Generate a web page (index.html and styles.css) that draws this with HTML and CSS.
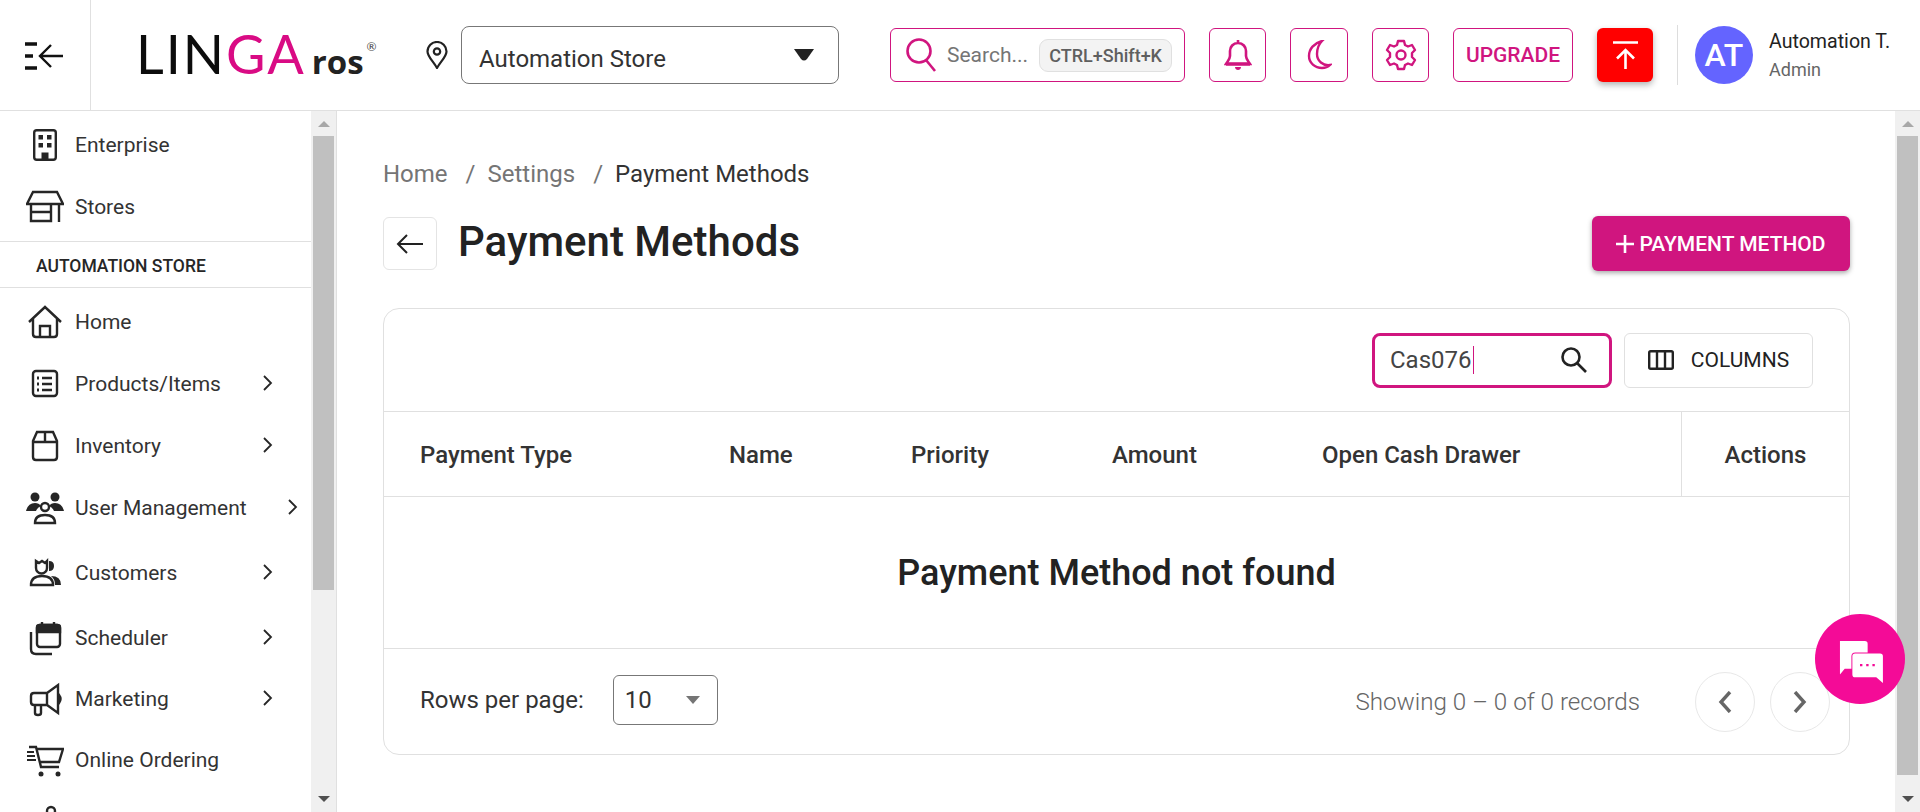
FILE: index.html
```html
<!DOCTYPE html>
<html>

<head>
    <title>Payment Methods</title>
    <link rel="stylesheet" href="styles.css">
</head>

<body>
    <header class="topbar">
        <div class="toggle-cell">
            <svg width="38" height="30" viewBox="0 0 38 30" fill="none" stroke="#111" stroke-width="2.4">
                <path d="M0 3h12M0 15h8M0 27h12" stroke-width="3.4" />
                <path d="M38 15H15M26 4 15 15l11 11" />
            </svg>
        </div>
        <div class="logo"><span class="logo-dark">LIN</span><span class="logo-pink">GA</span><span class="logo-ros">ros</span><span class="logo-reg">®</span></div>
        <svg class="pin" width="22" height="28" viewBox="0 0 22 28" fill="none" stroke="#222" stroke-width="2.2">
            <path d="M11 27C7 20 1.500 15.500 1.500 10.500a9.500 9.500 0 0 1 19 0C20.500 15.500 15 20 11 27z" />
            <circle cx="11" cy="10.500" r="3.200" />
        </svg>
        <div class="store-select">
            <span class="store-name">Automation Store</span>
            <svg width="20" height="12" viewBox="0 0 20 12"><path d="M0 0h20l-7 10q-3 3-6 0z" fill="#222" /></svg>
        </div>
        <div class="global-search">
            <svg width="34" height="34" viewBox="0 0 34 34" fill="none" stroke="#d0157f" stroke-width="2.600">
                <circle cx="14" cy="13" r="11.500" />
                <path d="M21 22l9 11" />
            </svg>
            <span class="search-hint">Search...</span>
            <span class="shortcut">CTRL+Shift+K</span>
        </div>
        <button class="icon-btn">
            <svg width="28" height="32" viewBox="0 0 28 32" fill="none" stroke="#d0157f" stroke-width="2.600">
                <path d="M14 1v3M14 4c-5 0-8 4-8 8v5c0 3-2 5-4 8h24c-2-3-4-5-4-8v-5c0-4-3-8-8-8z" />
                <path d="M2 25h24" stroke-width="3.400" />
                <path d="M11 28c0 4 6 4 6 0z" fill="#d0157f" stroke="none" />
            </svg>
        </button>
        <button class="icon-btn wide">
            <svg width="26" height="30" viewBox="0 0 26 30" fill="none" stroke="#d0157f" stroke-width="2.400">
                <path d="M16 1C8 3 3 9 3 16c0 7 6 12 13 12 3 0 6-1 8-3-7 1-13-4-13-11 0-5 2-10 5-13z" />
            </svg>
        </button>
        <button class="icon-btn">
            <svg width="32" height="32" viewBox="0 0 32 32" fill="none" stroke="#d0157f" stroke-width="2.400">
                <path d="M13 2h6l1 4 3 1.500 4-1.500 3 5-3 3v4l3 3-3 5-4-1.500-3 1.500-1 4h-6l-1-4-3-1.500L5 26l-3-5 3-3v-4l-3-3 3-5 4 1.500L12 6z" stroke-linejoin="round" />
                <circle cx="16" cy="16" r="4.500" />
            </svg>
        </button>
        <button class="upgrade-btn">UPGRADE</button>
        <button class="red-btn">
            <svg width="25" height="28" viewBox="0 0 25 28" fill="none" stroke="#fff" stroke-width="2.600">
                <path d="M0 1.500h25M12.500 28V9M4 17.500 12.500 9 21 17.500" />
            </svg>
        </button>
        <div class="user-divider"></div>
        <div class="avatar">AT</div>
        <div class="user-info">
            <div class="user-name">Automation T.</div>
            <div class="user-role">Admin</div>
        </div>
    </header>

    <div class="shell">
        <aside class="sidebar">
            <nav class="side-nav">
                <div class="nav-group first">
                    <div class="nav-row">
                        <svg class="nav-icon" viewBox="0 0 38 38" fill="none" stroke="#262626" stroke-width="2.400">
                            <rect x="8.200" y="4.200" width="21.600" height="29.600" rx="2.500" />
                            <path d="M12.500 9h4.500v4.500h-4.500zM21 9h4.500v4.500H21zM12.500 17h4.500v4.500h-4.500zM21 17h4.500v4.500H21zM15.500 33v-6.500h7V33z" fill="#262626" stroke="none" />
                        </svg>
                        <span>Enterprise</span>
                    </div>
                    <div class="nav-row">
                        <svg class="nav-icon" viewBox="0 0 38 38" fill="none" stroke="#262626" stroke-width="2.400">
                            <path d="M7 4h24l6 12H1zM5 16v17h20V16M5 24h20M33 16v18" />
                        </svg>
                        <span>Stores</span>
                    </div>
                </div>
                <div class="nav-section">AUTOMATION STORE</div>
                <div class="nav-group second">
                    <div class="nav-row">
                        <svg class="nav-icon" viewBox="0 0 38 38" fill="none" stroke="#262626" stroke-width="2.400">
                            <path d="M3 19 19 4l16 15M7 16v15q0 3 3 3h18q3 0 3-3V16M14 34V23h10v11" />
                        </svg>
                        <span>Home</span>
                    </div>
                    <div class="nav-row">
                        <svg class="nav-icon" viewBox="0 0 38 38" fill="none" stroke="#262626" stroke-width="2.400">
                            <rect x="7" y="6" width="24" height="25" rx="3" />
                            <path d="M16 13h10M16 19h10M16 25h10" />
                            <path d="M11 13h2M11 19h2M11 25h2" stroke-width="3" />
                        </svg>
                        <span class="nav-label">Products/Items</span>
                        <svg class="chev" width="10" height="16" viewBox="0 0 10 16" fill="none" stroke="#262626" stroke-width="1.800"><path d="M1 1l7 7-7 7" /></svg>
                    </div>
                    <div class="nav-row">
                        <svg class="nav-icon" viewBox="0 0 38 38" fill="none" stroke="#262626" stroke-width="2.400">
                            <path d="M7 14l4-9h16l4 9v16q0 3-3 3H10q-3 0-3-3zM7 15h24M19 5v10" />
                        </svg>
                        <span class="nav-label">Inventory</span>
                        <svg class="chev" width="10" height="16" viewBox="0 0 10 16" fill="none" stroke="#262626" stroke-width="1.800"><path d="M1 1l7 7-7 7" /></svg>
                    </div>
                    <div class="nav-row">
                        <svg class="nav-icon" viewBox="0 0 38 38" fill="none" stroke="#262626" stroke-width="2.400">
                            <circle cx="9" cy="8" r="4.500" fill="#262626" stroke="none" />
                            <circle cx="29" cy="8" r="4.500" fill="#262626" stroke="none" />
                            <path d="M0 22q2-8 9-8 4 0 6 3-4 2-5 5zM38 22q-2-8-9-8-4 0-6 3 4 2 5 5z" fill="#262626" stroke="none" />
                            <circle cx="19" cy="18" r="4" />
                            <path d="M9 34q0-8 10-8t10 8z" />
                        </svg>
                        <span class="nav-label">User Management</span>
                        <svg class="chev" width="10" height="16" viewBox="0 0 10 16" fill="none" stroke="#262626" stroke-width="1.800"><path d="M1 1l7 7-7 7" /></svg>
                    </div>
                    <div class="nav-row tall">
                        <svg class="nav-icon" viewBox="0 0 38 38" fill="none" stroke="#262626" stroke-width="2.400">
                            <path d="M10 7l3 2 3-2 3 2 2-2v7a5.500 5.500 0 0 1-11 0z" />
                            <path d="M23 7q5 0 5 5t-5 5z" fill="#262626" stroke="none" />
                            <path d="M5 31q0-9 11-9t11 9z" />
                            <path d="M25 22q10 0 10 9h-6q0-6-4-9z" fill="#262626" stroke="none" />
                        </svg>
                        <span class="nav-label">Customers</span>
                        <svg class="chev" width="10" height="16" viewBox="0 0 10 16" fill="none" stroke="#262626" stroke-width="1.800"><path d="M1 1l7 7-7 7" /></svg>
                    </div>
                    <div class="nav-row">
                        <svg class="nav-icon" viewBox="0 0 38 38" fill="none" stroke="#262626" stroke-width="2.400">
                            <rect x="11" y="6" width="23" height="22" rx="3" />
                            <path d="M11 8q0-2 3-2h17q3 0 3 2v5H11zM16 3v4M28 3v4" fill="#262626" />
                            <path d="M5 13v17q0 5 5 5h16" />
                        </svg>
                        <span class="nav-label">Scheduler</span>
                        <svg class="chev" width="10" height="16" viewBox="0 0 10 16" fill="none" stroke="#262626" stroke-width="1.800"><path d="M1 1l7 7-7 7" /></svg>
                    </div>
                    <div class="nav-row short">
                        <svg class="nav-icon" viewBox="0 0 38 38" fill="none" stroke="#262626" stroke-width="2.400">
                            <path d="M32 5v28L21 25H8q-3 0-3-3v-6q0-3 3-3h13zM21 13v12M9 25v8q0 2 3 2t3-2v-8" />
                            <path d="M33 15q3 4 0 8z" fill="#262626" />
                        </svg>
                        <span class="nav-label">Marketing</span>
                        <svg class="chev" width="10" height="16" viewBox="0 0 10 16" fill="none" stroke="#262626" stroke-width="1.800"><path d="M1 1l7 7-7 7" /></svg>
                    </div>
                    <div class="nav-row">
                        <svg class="nav-icon" viewBox="0 0 38 38" fill="none" stroke="#262626" stroke-width="2.400">
                            <path d="M3 6h7l5 20h18M11 8h26l-4 13H14" />
                            <path d="M1 11h7M1 15h8M1 19h9" stroke-width="2" />
                            <circle cx="15" cy="33" r="2.500" fill="#262626" stroke="none" />
                            <circle cx="32" cy="33" r="2.500" fill="#262626" stroke="none" />
                        </svg>
                        <span>Online Ordering</span>
                    </div>
                    <div class="nav-row">
                        <svg class="nav-icon" viewBox="0 0 38 38" fill="none" stroke="#262626" stroke-width="2.400">
                            <circle cx="25" cy="8" r="4" />
                            <path d="M22 12 8 30" />
                        </svg>
                    </div>
                </div>
            </nav>
            <div class="scroll-track">
                <span class="arrow-up"></span>
                <div class="scroll-thumb side-thumb"></div>
                <span class="arrow-down"></span>
            </div>
        </aside>

        <main class="content">
            <div class="breadcrumb">
                <span class="crumb">Home</span>
                <span class="crumb-sep">/</span>
                <span class="crumb">Settings</span>
                <span class="crumb-sep">/</span>
                <span class="crumb-current">Payment Methods</span>
            </div>
            <div class="title-row">
                <button class="back-btn">
                    <svg width="28" height="20" viewBox="0 0 28 20" fill="none" stroke="#222" stroke-width="2">
                        <path d="M27 10H2M11 1 2 10l9 9" />
                    </svg>
                </button>
                <h1 class="page-title">Payment Methods</h1>
                <button class="add-btn">
                    <svg width="18" height="18" viewBox="0 0 18 18" fill="none" stroke="#fff" stroke-width="2.600"><path d="M9 0v18M0 9h18" /></svg>
                    PAYMENT METHOD
                </button>
            </div>

            <section class="card">
                <div class="card-toolbar">
                    <div class="table-search">
                        <span class="table-search-text">Cas076</span><span class="caret"></span>
                        <svg width="28" height="28" viewBox="0 0 28 28" fill="none" stroke="#222" stroke-width="2.600">
                            <circle cx="11" cy="11" r="8.500" />
                            <path d="M17 17l9 9" />
                        </svg>
                    </div>
                    <button class="columns-btn">
                        <svg width="26" height="20" viewBox="0 0 26 20" fill="none" stroke="#222" stroke-width="2.400">
                            <rect x="1.200" y="1.200" width="23.600" height="17.600" rx="1.500" />
                            <path d="M9 1v18M17 1v18" />
                        </svg>
                        COLUMNS
                    </button>
                </div>
                <table class="pay-table">
                    <colgroup>
                        <col class="col-type">
                        <col class="col-name">
                        <col class="col-priority">
                        <col class="col-amount">
                        <col class="col-drawer">
                        <col class="col-actions">
                    </colgroup>
                    <thead>
                        <tr>
                            <th>Payment Type</th>
                            <th>Name</th>
                            <th>Priority</th>
                            <th>Amount</th>
                            <th>Open Cash Drawer</th>
                            <th class="actions-head">Actions</th>
                        </tr>
                    </thead>
                    <tbody>
                        <tr>
                            <td colspan="6" class="empty-cell">Payment Method not found</td>
                        </tr>
                    </tbody>
                </table>
                <div class="card-footer">
                    <span class="rows-label">Rows per page:</span>
                    <div class="rows-select">
                        <span>10</span>
                        <svg width="14" height="8" viewBox="0 0 14 8"><path d="M0 0h14L7 8z" fill="#757575" /></svg>
                    </div>
                    <span class="records">Showing 0 – 0 of 0 records</span>
                    <button class="page-btn">
                        <svg width="14" height="22" viewBox="0 0 14 22" fill="none" stroke="#666" stroke-width="3.400"><path d="M12 1 3 11l9 10" /></svg>
                    </button>
                    <button class="page-btn">
                        <svg width="14" height="22" viewBox="0 0 14 22" fill="none" stroke="#666" stroke-width="3.400"><path d="M2 1l9 10-9 10" /></svg>
                    </button>
                </div>
            </section>
        </main>

        <div class="scroll-track">
            <span class="arrow-up"></span>
            <div class="scroll-thumb"></div>
            <span class="arrow-down"></span>
        </div>
    </div>

    <div class="chat-bubble">
        <svg width="48" height="42" viewBox="0 0 48 44">
            <path d="M3 0h26q3 0 3 3v9H19q-4 0-4 4v13H8l-5 6V3q0-3 0-3z" fill="#fff" />
            <path d="M19 13h26q3 0 3 3v28l-7-6H19q-3 0-3-3V16q0-3 3-3z" fill="#fff" />
            <path d="M24 24h2.500v2.500H24zM30.500 24H33v2.500h-2.500zM37 24h2.500v2.500H37z" fill="#f40b97" />
        </svg>
    </div>
</body>

</html>
```
FILE: styles.css
```css
* {
    box-sizing: border-box;
}

html,
body {
    margin: 0;
    height: 812px;
    overflow: hidden;
}

body {
    font-family: Roboto, sans-serif;
    color: #262626;
    background-color: #fff;
}

button {
    font-family: Roboto, sans-serif;
    background-color: #fff;
    padding: 0;
    cursor: pointer;
}

/* top bar */
.topbar {
    height: 111px;
    display: flex;
    align-items: center;
    border-bottom: 1px solid #e0e0e0;
}

.toggle-cell {
    width: 91px;
    height: 110px;
    display: flex;
    align-items: center;
    padding: 2px 0 0 25px;
    border-right: 1px solid #e0e0e0;
}

.logo {
    width: 290px;
    margin-left: 45px;
    display: flex;
    align-items: baseline;
    font-family: Lato, sans-serif;
    font-size: 54px;
    letter-spacing: 2px;
    line-height: 1;
    position: relative;
    top: -1px;
}

.logo-dark {
    color: #0c0c0c;
}

.logo-pink {
    color: #d90b84;
}

.logo-ros {
    font-family: "Open Sans", sans-serif;
    font-weight: 700;
    font-size: 33px;
    letter-spacing: 0;
    color: #222;
    margin-left: 6px;
}

.logo-reg {
    font-size: 12px;
    letter-spacing: 0;
    color: #444;
    align-self: flex-start;
    margin: 14px 0 0 3px;
}

.store-select {
    width: 378px;
    height: 58px;
    margin-left: 13px;
    padding: 0 24px 0 17px;
    display: flex;
    align-items: center;
    justify-content: space-between;
    border: 1px solid #777;
    border-radius: 8px;
    font-size: 24px;
    color: #333;
}

.store-name {
    padding-top: 7px;
}

.global-search {
    width: 295px;
    height: 54px;
    margin-left: 51px;
    padding: 0 12px 0 14px;
    display: flex;
    align-items: center;
    border: 1px solid #d0157f;
    border-radius: 6px;
}

.search-hint {
    margin-left: 8px;
    font-size: 21px;
    color: #757575;
}

.shortcut {
    margin-left: auto;
    height: 33px;
    padding: 0 9px;
    display: flex;
    align-items: center;
    font-size: 18px;
    font-weight: 500;
    color: #5f5f5f;
    background-color: #f3f3f3;
    border: 1px solid #e0e0e0;
    border-radius: 9px;
}

.icon-btn {
    width: 57px;
    height: 54px;
    margin-left: 24px;
    display: flex;
    align-items: center;
    justify-content: center;
    border: 1px solid #d0157f;
    border-radius: 6px;
}

.icon-btn.wide {
    width: 58px;
}

.upgrade-btn {
    width: 120px;
    height: 54px;
    margin-left: 24px;
    font-size: 21px;
    font-weight: 500;
    color: #d0157f;
    border: 1px solid #d0157f;
    border-radius: 6px;
}

.red-btn {
    width: 56px;
    height: 54px;
    margin-left: 24px;
    display: flex;
    align-items: center;
    justify-content: center;
    background-color: #f00;
    border: none;
    border-radius: 6px;
    box-shadow: 0 3px 6px rgba(0, 0, 0, 0.3);
}

.user-divider {
    width: 1px;
    height: 60px;
    margin-left: 24px;
    background-color: #ddd;
}

.avatar {
    width: 58px;
    height: 58px;
    margin-left: 17px;
    display: flex;
    align-items: center;
    justify-content: center;
    border-radius: 50%;
    background-color: #6464ff;
    color: #fff;
    font-size: 32px;
    font-weight: 500;
}

.user-info {
    margin-left: 16px;
}

.user-name {
    font-size: 19.600px;
    color: #222;
    margin-bottom: 6px;
}

.user-role {
    font-size: 18px;
    color: #666;
}

/* layout below bar */
.shell {
    height: 701px;
    display: flex;
}

.sidebar {
    width: 337px;
    flex-shrink: 0;
    display: flex;
    border-right: 1px solid #e0e0e0;
}

.side-nav {
    width: 311px;
    overflow: hidden;
}

.nav-group.first {
    padding-top: 3px;
    padding-bottom: 3px;
    border-bottom: 1px solid #e0e0e0;
}

.nav-group.second {
    padding-top: 3px;
}

.nav-row {
    height: 62px;
    padding-left: 26px;
    display: flex;
    align-items: center;
    font-size: 21px;
    color: #333;
}

.nav-row.tall {
    height: 68px;
}

.nav-row.short {
    height: 60px;
}

.nav-icon {
    width: 38px;
    height: 38px;
    margin-right: 11px;
    flex-shrink: 0;
}

.nav-label {
    min-width: 147px;
}

.chev {
    margin-left: 41px;
    margin-top: -3px;
}

.nav-section {
    height: 46px;
    padding: 2px 0 0 36px;
    display: flex;
    align-items: center;
    font-size: 17.500px;
    font-weight: 500;
    border-bottom: 1px solid #e0e0e0;
}

.scroll-track {
    width: 25px;
    flex-shrink: 0;
    display: flex;
    flex-direction: column;
    align-items: center;
    background-color: #f0f0f0;
    position: relative;
}

.scroll-thumb {
    width: 21px;
    height: 639px;
    margin-top: 25px;
    background-color: #c0c0c0;
}

.side-thumb {
    height: 454px;
}

.arrow-up,
.arrow-down {
    position: absolute;
    width: 0;
    height: 0;
    border-left: 6px solid transparent;
    border-right: 6px solid transparent;
}

.arrow-up {
    top: 10px;
    border-bottom: 6px solid #a8a8a8;
}

.arrow-down {
    bottom: 10px;
    border-top: 6px solid #505050;
}

/* main content */
.content {
    flex: 1;
    min-width: 0;
    padding: 48px 45px 0 46px;
    overflow: hidden;
}

.breadcrumb {
    height: 30px;
    display: flex;
    align-items: center;
    font-size: 24px;
}

.crumb {
    color: #757575;
}

.crumb-sep {
    color: #757575;
    margin: 0 12px 0 18px;
}

.crumb-current {
    color: #333;
}

.title-row {
    margin-top: 27px;
    display: flex;
    align-items: center;
}

.back-btn {
    width: 54px;
    height: 53px;
    display: flex;
    align-items: center;
    justify-content: center;
    border: 1px solid #e4e4e4;
    border-radius: 6px;
}

.page-title {
    margin: -5px 0 0 21px;
    font-size: 42px;
    font-weight: 500;
    color: #222;
}

.add-btn {
    width: 258px;
    height: 55px;
    margin-left: auto;
    display: flex;
    align-items: center;
    justify-content: center;
    gap: 5px;
    font-size: 21px;
    font-weight: 500;
    color: #fff;
    background-color: #d0157f;
    border: none;
    border-radius: 6px;
    box-shadow: 0 2px 5px rgba(0, 0, 0, 0.35);
}

.card {
    height: 447px;
    margin-top: 37px;
    border: 1px solid #e0e0e0;
    border-radius: 16px;
}

.card-toolbar {
    height: 103px;
    padding: 0 36px 0 0;
    display: flex;
    align-items: center;
    justify-content: flex-end;
    gap: 12px;
    border-bottom: 1px solid #e0e0e0;
}

.table-search {
    width: 240px;
    height: 55px;
    padding: 0 21px 0 15px;
    display: flex;
    align-items: center;
    border: 3px solid #d0157f;
    border-radius: 8px;
    font-size: 24px;
    color: #444;
}

.caret {
    width: 1px;
    height: 28px;
    margin-left: 1px;
    background-color: #d0157f;
}

.table-search svg {
    margin-left: auto;
}

.columns-btn {
    width: 189px;
    height: 55px;
    display: flex;
    align-items: center;
    justify-content: center;
    gap: 17px;
    font-size: 21px;
    color: #222;
    border: 1px solid #e0e0e0;
    border-radius: 6px;
}

.pay-table {
    width: 100%;
    border-collapse: collapse;
    table-layout: fixed;
}

.col-type {
    width: 309px;
}

.col-name {
    width: 182px;
}

.col-priority {
    width: 201px;
}

.col-amount {
    width: 210px;
}

.col-drawer {
    width: 395px;
}

.pay-table th {
    height: 84px;
    padding: 2px 0 0 36px;
    text-align: left;
    font-size: 24px;
    font-weight: 500;
    color: #333;
    border-bottom: 1px solid #e0e0e0;
}

.pay-table th.actions-head {
    padding-left: 43px;
    border-left: 1px solid #e0e0e0;
}

.empty-cell {
    height: 152px;
    padding-top: 2px;
    text-align: center;
    font-size: 36px;
    font-weight: 500;
    color: #222;
    border-bottom: 1px solid #e0e0e0;
}

.card-footer {
    height: 106px;
    padding: 0 19px 0 36px;
    display: flex;
    align-items: center;
}

.rows-label {
    margin-top: -3px;
    font-size: 24px;
    color: #333;
}

.rows-select {
    width: 105px;
    height: 50px;
    margin: -3px 0 0 29px;
    padding: 0 17px 0 11px;
    display: flex;
    align-items: center;
    justify-content: space-between;
    border: 1px solid #777;
    border-radius: 6px;
    font-size: 24px;
    color: #333;
}

.records {
    margin-left: auto;
    margin-right: 55px;
    font-size: 24.200px;
    font-weight: 300;
    color: #666;
}

.page-btn {
    width: 60px;
    height: 60px;
    margin-left: 15px;
    display: flex;
    align-items: center;
    justify-content: center;
    border: 1px solid #e8e8e8;
    border-radius: 50%;
}

.records + .page-btn {
    margin-left: 0;
}

/* floats over the page corner */
.chat-bubble {
    position: fixed;
    left: 1815px;
    top: 614px;
    width: 90px;
    height: 90px;
    padding-top: 6px;
    display: flex;
    align-items: center;
    justify-content: center;
    border-radius: 50%;
    background-color: #f40b97;
}
```
